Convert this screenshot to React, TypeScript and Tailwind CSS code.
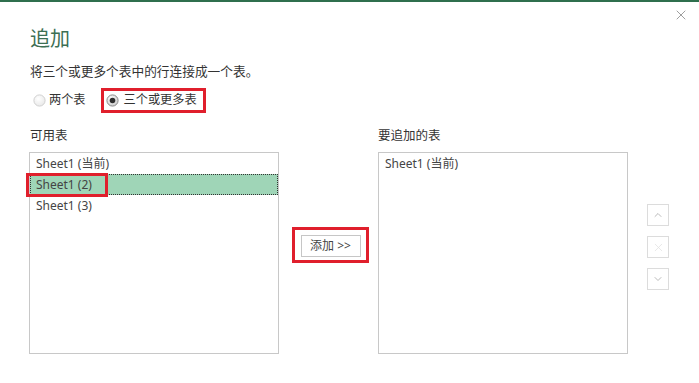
import { ChevronDown, ChevronUp, X } from 'lucide-react';

function RadioIcon({ checked }: { checked?: boolean }) {
    return <svg width="13" height="13" viewBox="0 0 13 13" className="shrink-0">
        <defs>
            <radialGradient id={checked ? 'rg-on' : 'rg-off'} cx="40%" cy="35%" r="70%">
                <stop offset="0%" stopColor="#ffffff" />
                <stop offset="100%" stopColor={checked ? '#c9c9c9' : '#e8e8e8'} />
            </radialGradient>
        </defs>
        <circle
            cx="6.5"
            cy="6.5"
            r="5.6"
            fill={`url(#${checked ? 'rg-on' : 'rg-off'})`}
            stroke={checked ? '#8a8a8a' : '#d0d0d0'}
            strokeWidth="1"
        />
        {checked && <circle cx="6.5" cy="6.5" r="2.8" fill="#2f2f2f" />}
    </svg>;
}

function SideButton({ children }: { children: React.ReactNode }) {
    return <div className="flex h-[22px] w-[22px] items-center justify-center border border-[#dcdcdc] bg-white">
        {children}
    </div>;
}

export default function App() {
    return <div className="relative h-[383px] w-[699px] overflow-hidden border-t-2 border-[#2f6f4d] bg-white font-['Noto_Sans','Noto_Sans_CJK_SC',sans-serif] text-[#333]">
        <X className="absolute right-[10px] top-[5px] h-[16px] w-[16px] text-[#7a7a7a]" strokeWidth={1.1} />

        <div className="pl-[29px] pt-[24px]">
            <h1 className="pl-[1px] text-[20px] font-normal leading-[26px] text-[#3d6f54]">追加</h1>
            <p className="mt-[10px] pl-[1px] text-[12.7px] leading-[18px]">将三个或更多个表中的行连接成一个表。</p>

            <div className="mt-[8px] flex h-[25px] items-center text-[12.2px]">
                <label className="ml-[4px] flex items-center gap-[3px] text-[#333]">
                    <RadioIcon />
                    两个表
                </label>
                <label className="ml-[15px] flex h-[25px] items-center gap-[5px] border-[3px] border-[#e01f2c] pl-[2px] pr-[6px]">
                    <RadioIcon checked />
                    三个或更多表
                </label>
            </div>

            <div className="mt-[14px] flex">
                <div className="w-[250px]">
                    <div className="pl-[1px] text-[12.5px] leading-[18px]">可用表</div>
                    <div className="relative mt-[7px] h-[202px] border border-[#c8c8c8] text-[12px] text-[#444]">
                        <div className="h-[21px] pl-[6px] leading-[21px]">Sheet1 (当前)</div>
                        <div className="h-[21px] border border-dotted border-[#333] bg-[#9fd5b7] pl-[5px] leading-[19px]">Sheet1 (2)</div>
                        <div className="h-[21px] pl-[6px] leading-[21px]">Sheet1 (3)</div>
                        <div className="absolute left-[-4px] top-[20px] h-[24px] w-[82px] border-[3px] border-[#e01f2c]" />
                    </div>
                </div>

                <div className="w-[99px] pl-[13px] pt-[100px]">
                    <div className="flex h-[36px] w-[77px] items-center justify-center border-[3px] border-[#e01f2c] pt-[2px]">
                        <button className="h-[22px] w-[60px] border border-[#c6c6c6] bg-white text-[12px] leading-[20px] text-[#444]">
                            添加 &gt;&gt;
                        </button>
                    </div>
                </div>

                <div className="w-[250px]">
                    <div className="text-[12.5px] leading-[18px]">要追加的表</div>
                    <div className="mt-[7px] h-[202px] border border-[#c8c8c8] text-[12px] text-[#444]">
                        <div className="h-[21px] pl-[6px] leading-[21px]">Sheet1 (当前)</div>
                    </div>
                </div>

                <div className="ml-[19px] flex flex-col gap-[10px] pt-[77px]">
                    <SideButton>
                        <ChevronUp className="h-[12px] w-[12px] text-[#a8a8a8]" strokeWidth={1.6} />
                    </SideButton>
                    <SideButton>
                        <X className="h-[13px] w-[13px] text-[#e2e2e2]" strokeWidth={1.4} />
                    </SideButton>
                    <SideButton>
                        <ChevronDown className="h-[12px] w-[12px] text-[#a8a8a8]" strokeWidth={1.6} />
                    </SideButton>
                </div>
            </div>
        </div>
    </div>;
}
